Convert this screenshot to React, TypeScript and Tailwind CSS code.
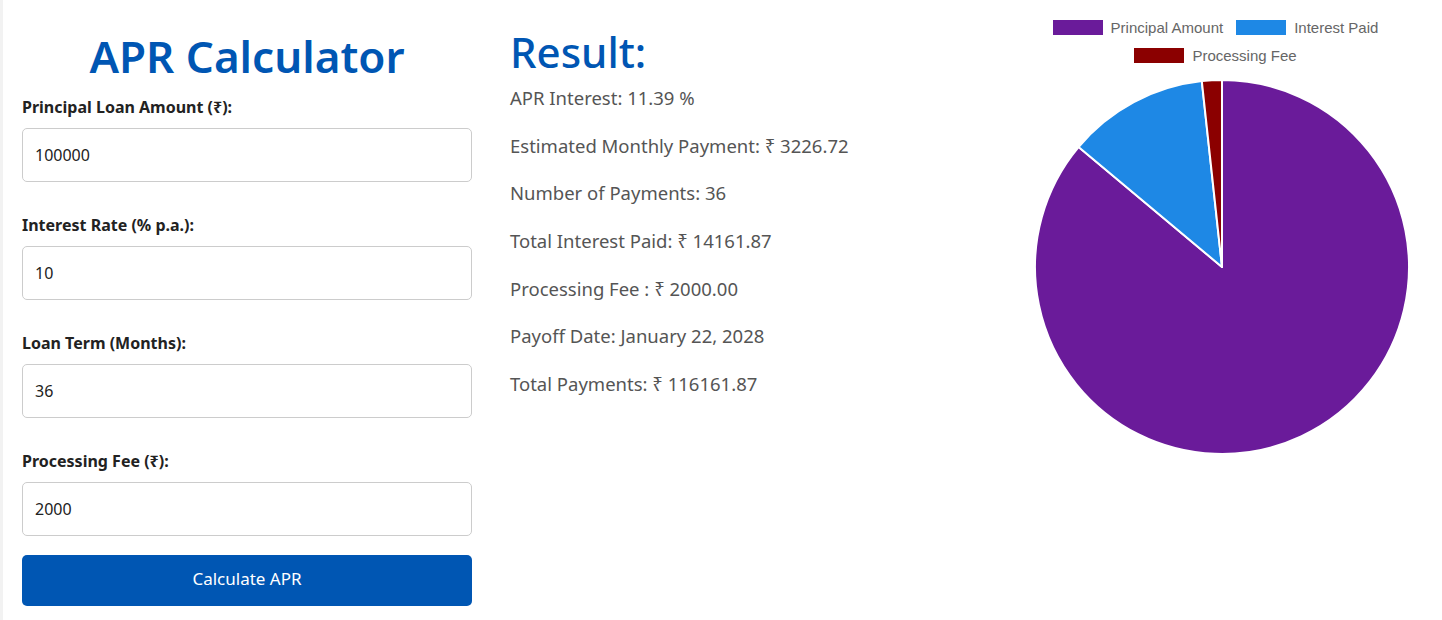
import React from "react";

const fields = [
  { label: "Principal Loan Amount (₹):", value: "100000" },
  { label: "Interest Rate (% p.a.):", value: "10" },
  { label: "Loan Term (Months):", value: "36" },
  { label: "Processing Fee (₹):", value: "2000" },
];

const results = [
  "APR Interest: 11.39 %",
  "Estimated Monthly Payment: ₹ 3226.72",
  "Number of Payments: 36",
  "Total Interest Paid: ₹ 14161.87",
  "Processing Fee : ₹ 2000.00",
  "Payoff Date: January 22, 2028",
  "Total Payments: ₹ 116161.87",
];

const slices = [
  { label: "Principal Amount", value: 100000, color: "#6a1b9a" },
  { label: "Interest Paid", value: 14161.87, color: "#1e88e5" },
  { label: "Processing Fee", value: 2000, color: "#8b0000" },
];

const Field = ({ label, value }: { label: string; value: string }) => (
  <div className="mb-[31px]">
    <label className="block text-[16px] leading-[24px] font-bold text-[#222] mb-[9px]">{label}</label>
    <input
      type="text"
      defaultValue={value}
      className="w-full h-[54px] px-3 rounded-[5px] border border-[#ccc] text-[16px] text-[#222] bg-white outline-none"
    />
  </div>
);

const Legend = ({ label, color }: { label: string; color: string }) => (
  <div className="flex items-center gap-2 h-[15px]">
    <span className="w-[50px] h-[15px]" style={{ backgroundColor: color }} />
    <span className="text-[15px] leading-[15px] text-[#666]">{label}</span>
  </div>
);

const Pie = () => {
  const total = slices.reduce((s, x) => s + x.value, 0);
  const cx = 188, cy = 188, r = 187;
  let a = -Math.PI / 2;
  return (
    <svg width="376" height="376" viewBox="0 0 376 376">
      {slices.map((s) => {
        const sweep = (s.value / total) * Math.PI * 2;
        const a1 = a + sweep;
        const x0 = cx + r * Math.cos(a), y0 = cy + r * Math.sin(a);
        const x1 = cx + r * Math.cos(a1), y1 = cy + r * Math.sin(a1);
        const large = sweep > Math.PI ? 1 : 0;
        a = a1;
        return (
          <path
            key={s.label}
            d={`M${cx} ${cy} L${x0} ${y0} A${r} ${r} 0 ${large} 1 ${x1} ${y1} Z`}
            fill={s.color}
            stroke="#fff"
            strokeWidth="2"
            strokeLinejoin="round"
          />
        );
      })}
    </svg>
  );
};

export default function App() {
  return (
    <div className="h-[620px] bg-white border-l-[3px] border-[#f2f2f2] flex font-['Noto_Sans',sans-serif] overflow-hidden">
      <div className="ml-[19px] w-[450px] pt-[30px]">
        <h1 className="text-center text-[44px] leading-[52px] font-semibold text-[#0056b3] mb-[13px]">APR Calculator</h1>
        {fields.map((f) => (
          <Field key={f.label} {...f} />
        ))}
        <button className="-mt-[12px] w-full h-[51px] rounded-[5px] bg-[#0056b3] text-white text-[17px] leading-[24px] pb-[3px]">Calculate APR</button>
      </div>

      <div className="ml-[38px] w-[500px] pt-[26px]">
        <h2 className="text-[42px] leading-[52px] font-medium text-[#0056b3] mb-[6px]">Result:</h2>
        {results.map((t) => (
          <p key={t} className="text-[18.5px] leading-[28px] text-[#555] mb-[19.7px]">{t}</p>
        ))}
      </div>

      <div className="ml-[20px] w-[384px] pt-[20px] flex flex-col items-center font-['Liberation_Sans',sans-serif]">
        <div className="flex flex-col items-center gap-[13px] pr-[13px]">
          <div className="flex gap-[13px]">
            <Legend {...slices[0]} />
            <Legend {...slices[1]} />
          </div>
          <Legend {...slices[2]} />
        </div>
        <div className="mt-[16px] leading-none">
          <Pie />
        </div>
      </div>
    </div>
  );
}
